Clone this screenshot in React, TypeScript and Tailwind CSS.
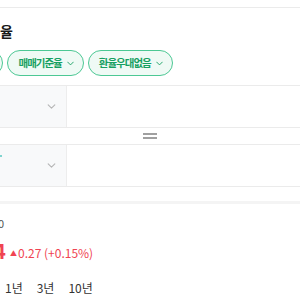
import React from 'react';

function Chevron({ className }: { className?: string }) {
  return (
    <svg viewBox="0 0 10 6" className={className} fill="none" stroke="currentColor" strokeWidth="1.3" strokeLinecap="round" strokeLinejoin="round">
      <path d="M1 1l4 4 4-4" />
    </svg>
  );
}

function Chip({ label, className = '' }: { label: string; className?: string }) {
  return (
    <div className={`flex h-[26px] shrink-0 items-center gap-[5px] rounded-full border border-[#4cc894] bg-[#effaf5] pl-[10px] pr-[9px] text-[10.5px] font-bold text-[#17a062] ${className}`}>
      <span className="tracking-[-1px]">{label}</span>
      <Chevron className="h-[5px] w-[7px] text-[#17a062]" />
    </div>
  );
}

function CurrencyRow({ value, mark }: { value?: string; mark?: boolean }) {
  return (
    <div className="flex h-[41px]">
      <div className="relative flex w-[67px] shrink-0 items-center justify-end border-r border-[#ededed] bg-[#f8f9fa] pr-[10px]">
        {mark && <span className="absolute left-0 top-[10px] h-[2px] w-[2px] rounded-full bg-[#58c7c0]" />}
        <Chevron className="h-[5px] w-[9px] text-[#b5b5b5]" />
      </div>
      <div className="flex flex-1 items-end justify-end overflow-hidden pb-[6px]">
        {value && <span className="-mr-[40px] text-[11px] text-[#8a8a8a]">{value}</span>}
      </div>
    </div>
  );
}

export default function App() {
  return (
    <div className="h-[300px] w-[300px] overflow-hidden bg-white font-['Noto_Sans_CJK_KR','Noto_Sans',sans-serif] text-[#222]">
      <div className="h-[8px] border-b border-[#ebebeb]" />

      {/* title, cut at the left edge */}
      <h2 className="mt-[14px] -ml-[13px] text-[14px] font-bold leading-[18px] text-[#191919]">환율</h2>

      {/* filter chips */}
      <div className="mt-[10px] flex gap-[4px]">
        <Chip label="미국 USD" className="-ml-[67px]" />
        <Chip label="매매기준율" />
        <Chip label="환율우대없음" />
      </div>

      {/* converter */}
      <div className="mt-[9px] border-t border-[#ebebeb]">
        <CurrencyRow />
        <div className="flex h-[18px] items-center justify-center border-y border-[#ebebeb]">
          <div className="flex flex-col gap-[2px]">
            <span className="block h-[2px] w-[14px] bg-[#a0a0a0]" />
            <span className="block h-[2px] w-[14px] bg-[#a0a0a0]" />
          </div>
        </div>
        <CurrencyRow value="1달러" mark />
        <div className="border-b border-[#ebebeb]" />
      </div>

      <div className="mt-[14px] h-[3px] bg-[#f4f4f4]" />

      {/* rate summary */}
      <div className="mt-[12px] -ml-[100px] w-[104px] text-right text-[11px] leading-[14px] text-[#555]">2025.01.10</div>
      <div className="mt-[8px] flex items-end">
        <div className="-ml-[100px] w-[106px] text-right text-[21px] font-bold leading-[24px] text-[#f04452]">1,388.44</div>
        <div className="mb-[2px] ml-[4px] flex items-center text-[12px] leading-[14px] text-[#f04452]">
          <span className="mr-[1px] text-[7px]">▲</span>0.27 (+0.15%)
        </div>
      </div>

      {/* period tabs */}
      <div className="mt-[18px] flex items-center gap-[14px] border-b border-[#ebebeb] pb-[9px] text-[12px] leading-[16px] text-[#333]">
        <span className="-ml-[60px] w-[51px] text-right">3개월</span>
        <span>1년</span>
        <span>3년</span>
        <span>10년</span>
      </div>
    </div>
  );
}
